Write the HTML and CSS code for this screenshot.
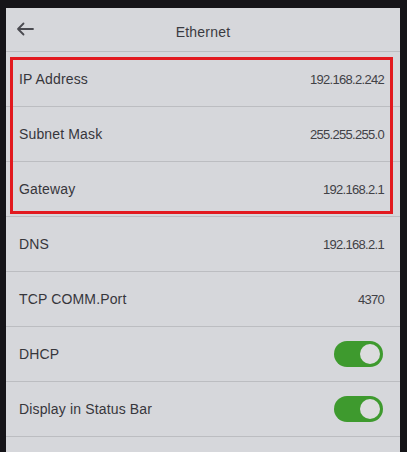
FILE: index.html
```html
<!DOCTYPE html>
<html lang="en">
<head>
  <meta charset="UTF-8"/>
  <meta name="viewport" content="width=device-width, initial-scale=1.0"/>
  <title>Ethernet</title>
  <link rel="stylesheet" href="styles.css">
</head>
<body>
  <div class="screen">
    <div class="header">
      <svg class="back" width="18" height="14" viewBox="0 0 18 14">
        <path d="M17 7H2M7.5 1.5L2 7l5.5 5.5" fill="none" stroke="#4a4a50" stroke-width="1.8" stroke-linecap="round" stroke-linejoin="round"/>
      </svg>
      <span class="title">Ethernet</span>
    </div>

    <div class="row"><span class="label">IP Address</span><span class="value">192.168.2.242</span></div>
    <div class="row"><span class="label">Subnet Mask</span><span class="value">255.255.255.0</span></div>
    <div class="row"><span class="label">Gateway</span><span class="value">192.168.2.1</span></div>
    <div class="row"><span class="label">DNS</span><span class="value">192.168.2.1</span></div>
    <div class="row"><span class="label">TCP COMM.Port</span><span class="value">4370</span></div>
    <div class="row"><span class="label">DHCP</span><span class="toggle on"><span class="knob"></span></span></div>
    <div class="row"><span class="label">Display in Status Bar</span><span class="toggle on"><span class="knob"></span></span></div>
  </div>

  <!-- annotation drawn over the screen -->
  <div class="highlight"></div>
</body>
</html>
```

FILE: styles.css
```css
body {
  margin: 0;
  background: #151418;
  font-family: "Liberation Sans", Arial, sans-serif;
  color: #36363b;
  height: 452px;
  overflow: hidden;
  position: relative;
}
.screen {
  margin: 8px 7px 0 6px;
  background: #d6d7db;
  height: 444px;
}
.header {
  height: 43px;
  border-bottom: 1px solid #bcbdc1;
  display: flex;
  align-items: center;
  justify-content: center;
  position: relative;
}
.back {
  position: absolute;
  left: 10px;
  top: 14px;
}
.title {
  font-size: 14px;
  color: #3a3a3f;
  letter-spacing: 0.2px;
  margin-top: 4px;
}
.row {
  height: 54px;
  border-bottom: 1px solid #bcbdc1;
  display: flex;
  align-items: center;
  justify-content: space-between;
  padding: 0 16px 0 13px;
}
.label {
  font-size: 14px;
  letter-spacing: 0.15px;
}
.value {
  font-size: 13px;
  letter-spacing: -0.7px;
  color: #414146;
}
.toggle {
  width: 49px;
  height: 26px;
  border-radius: 13px;
  background: #3e9a2e;
  display: flex;
  align-items: center;
  justify-content: flex-end;
  padding-right: 3px;
  box-sizing: border-box;
  margin-right: 1px;
}
.knob {
  width: 20px;
  height: 20px;
  border-radius: 50%;
  background: #dcdcde;
}
.highlight {
  position: absolute;
  left: 10px;
  top: 57px;
  width: 377px;
  height: 151px;
  border: 3px solid #e2191f;
}
```
